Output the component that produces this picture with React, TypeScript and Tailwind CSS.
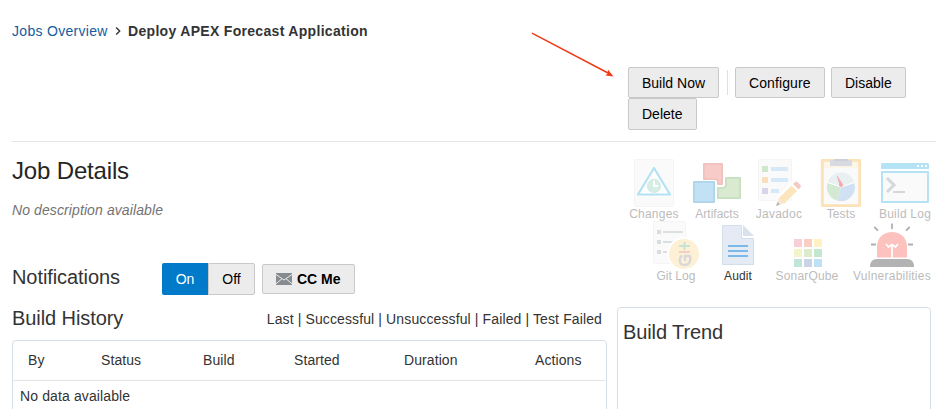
import React from "react";

type Tool = {
  label: string;
  width: string;
  viewBox: string;
  art: React.ReactNode;
  spacing: string;
  active?: boolean;
};

const changes = (
  <>
    <rect x="634.5" y="159.5" width="39" height="47" rx="1" fill="#fafafa" stroke="#f4f4f4" />
    <path d="M654 168L670 194.5H638Z" fill="#fff" stroke="#b3e2f5" strokeWidth="2.2" strokeLinejoin="round" />
    <circle cx="654" cy="186" r="7.2" fill="#d5ede4" />
    <path d="M654 180.5V186H658" fill="none" stroke="#fff" strokeWidth="1.8" />
  </>
);

const artifacts = (
  <>
    <path
      d="M703.9 179.1V163.9H722.1V184.1H717.9V182.5Q717.9 179.1 714.5 179.1Z"
      fill="#f7ccc8"
      stroke="#eec2be"
      strokeWidth="1.8"
      strokeLinejoin="round"
    />
    <path
      d="M725.9 177.9H740.1V198.1H717.9V187.9H722.5Q725.9 187.9 725.9 184.5Z"
      fill="#d9ead0"
      stroke="#c8dfc0"
      strokeWidth="1.8"
      strokeLinejoin="round"
    />
    <rect
      x="693.9"
      y="181.9"
      width="20.2"
      height="20.2"
      fill="#c2e1f4"
      stroke="#afd5ea"
      strokeWidth="1.8"
      strokeLinejoin="round"
    />
  </>
);

const javadoc = (
  <>
    <rect x="758.5" y="159.5" width="33" height="41" rx="1" fill="#fafafa" stroke="#f4f4f4" />
    <path d="M762 166h6v6h-6z" fill="#cfe7cd" />
    <path d="M762 177h6v6h-6z" fill="#fae0ba" />
    <path d="M762 188h6v6h-6z" fill="#dbd4e8" />
    <path d="M771 167h17v4h-17zM771 178h17v4h-17zM771 189h8v4h-8z" fill="#d6e9f8" />
    <path d="M775 207L777 197L794 180H801L803 187L784 205Z" fill="#fff" />
    <path d="M776 206L778.5 198.5L783.5 203.5Z" fill="#f5e7d8" />
    <path d="M776 206L777.5 202L780 204.5Z" fill="#b8b8b8" />
    <path d="M778.5 198.5L791.5 185.5L797 191L784 204Z" fill="#fbe5bd" />
    <path d="M793 184L795 182Q796.5 181 798 182.5L800.5 185Q801.5 186.5 800.3 187.7L798.5 189.5Z" fill="#f4cbc4" />
  </>
);

const tests = (
  <>
    <rect x="822.3" y="160.3" width="37.4" height="45.4" fill="#fcf5e8" stroke="#fbe2b9" strokeWidth="2.8" strokeLinejoin="round" />
    <path d="M824 168H858V204H824Z" fill="#fafafa" />
    <path d="M830 160h22v6h-22z" fill="#d7dadf" />
    <path d="M834 159h14v2h-14z" fill="#cbd0d8" />
    <path d="M841 187L827.7 182A14 14 0 0 1 854.3 182Z" fill="#e9f0f2" />
    <path d="M841 187L854.3 183A14 14 0 0 1 837 200.5Z" fill="#cfe1f2" />
    <path d="M841 187L837 200.5A14 14 0 0 1 827.5 183Z" fill="#d4e9d2" />
    <path d="M827.5 182.5L841 187L854.5 182.5" fill="none" stroke="#fff" strokeWidth="1" />
    <circle cx="841" cy="185" r="2.1" fill="#f4a9b1" />
    <path d="M837.4 176.5L841.7 183L840 185.5Z" fill="#f4a9b1" stroke="#f4a9b1" strokeWidth=".8" />
  </>
);

const buildLog = (
  <>
    <path d="M881 169V164.5Q881 163 882.5 163H927.5Q929 163 929 164.5V169Z" fill="#b3e3f5" />
    <path d="M917 165h2v2h-2zM921 165h2v2h-2zM925 165h2v2h-2z" fill="#fff" />
    <rect x="882" y="172" width="46" height="30" fill="#fafafa" stroke="#b3e3f5" strokeWidth="2" strokeLinejoin="round" />
    <path d="M887 178L894 185L887 192" fill="none" stroke="#d5d8db" strokeWidth="3" />
    <path d="M893 191h12v2h-12z" fill="#d5d8db" />
  </>
);

const gitLog = (
  <>
    <rect x="653.5" y="221.5" width="32" height="42" rx="1" fill="#fafafa" stroke="#f4f4f4" />
    <path d="M657 230h4v4h-4zM657 240h4v4h-4zM657 250h4v4h-4z" fill="#dadde0" />
    <path d="M663 231h20v2h-20zM663 241h14v2h-14zM663 251h4v2h-4z" fill="#dce0e3" />
    <circle cx="684" cy="254" r="17" fill="#fff" />
    <circle cx="684" cy="254" r="15" fill="#fdf0d4" />
    <path d="M679 246h11M684.5 242v8" fill="none" stroke="#c2e5d7" strokeWidth="2" />
    <path d="M679 252h11" stroke="#f4ccca" strokeWidth="2" />
    <path d="M682 255.5C678.5 258.5 679 265 684.5 265C690.5 265 691 259 689.8 256H685V261" fill="none" stroke="#d8d8dc" strokeWidth="2.4" />
  </>
);

const audit = (
  <>
    <path d="M722.5 225.5H741.5V238.5H753.5V264.5H722.5Z" fill="#e4ebf4" stroke="#d3deeb" strokeLinejoin="round" />
    <path d="M743 225L754 236H743Z" fill="#d9e2ec" />
    <path d="M728 245h20v2h-20zM728 250h20v2h-20zM728 255h20v2h-20z" fill="#7db9e8" />
  </>
);

const sonar = (
  <>
    <path d="M794 239h8v8h-8z" fill="#f8cfd8" />
    <path d="M804 239h8v8h-8z" fill="#f9cec3" />
    <path d="M814 239h8v8h-8z" fill="#fef2c5" />
    <path d="M794 249h8v8h-8z" fill="#f2f4ca" />
    <path d="M804 249h8v8h-8z" fill="#ddebcd" />
    <path d="M814 249h8v8h-8z" fill="#c5e6cf" />
    <path d="M794 259h8v8h-8z" fill="#c1e5d8" />
    <path d="M804 259h8v8h-8z" fill="#c9d4e9" />
    <path d="M814 259h8v8h-8z" fill="#bde1f5" />
  </>
);

const vulnerabilities = (
  <>
    <path d="M877 257.5V246.5C877 227 907 227 907 246.5V257.5Z" fill="#fec2be" />
    <path d="M870 267Q870 259 877 259H907Q914 259 914 267Z" fill="#b3b3b3" />
    <path d="M892 223.5V229M874.3 227L878 230.7M909.7 227L906 230.7M871 244.5H876M908 244.5H913" stroke="#b0b0b0" strokeWidth="1.8" />
    <path d="M892 258V245M886 244L888.5 247L892 244.5L895.5 247L898 244" fill="none" stroke="#fff" strokeWidth="1.7" />
  </>
);

const firstRow: Tool[] = [
  { label: "Changes", width: "w-[50px]", viewBox: "629 158 50 49", art: changes, spacing: "tracking-[0.24px]" },
  { label: "Artifacts", width: "w-[50px] ml-[13px]", viewBox: "692 158 50 49", art: artifacts, spacing: "tracking-normal" },
  { label: "Javadoc", width: "w-[50px] ml-3", viewBox: "754 158 50 49", art: javadoc, spacing: "tracking-[0.24px]" },
  { label: "Tests", width: "w-[50px] ml-3", viewBox: "816 158 50 49", art: tests, spacing: "tracking-[0.1px]" },
  { label: "Build Log", width: "w-[52px] ml-[13px]", viewBox: "879 158 52 49", art: buildLog, spacing: "tracking-[0.24px]" },
];

const secondRow: Tool[] = [
  { label: "Git Log", width: "w-[50px]", viewBox: "651 220 50 49", art: gitLog, spacing: "tracking-[0.05px]" },
  { label: "Audit", width: "w-[50px] ml-3", viewBox: "713 220 50 49", art: audit, spacing: "tracking-[0.1px]", active: true },
  { label: "SonarQube", width: "w-[62px] ml-[13px]", viewBox: "776 220 62 49", art: sonar, spacing: "tracking-[0.16px]" },
  { label: "Vulnerabilities", width: "w-[78px] ml-[15px]", viewBox: "853 220 78 49", art: vulnerabilities, spacing: "tracking-[0.24px]" },
];

function ToolLink({ label, width, viewBox, art, spacing, active }: Tool) {
  return (
    <a className={`flex h-[62px] flex-none flex-col items-center ${width}`}>
      <svg viewBox={viewBox} className="h-[49px] w-full flex-none overflow-visible">
        {art}
      </svg>
      <span
        className={`whitespace-nowrap text-xs leading-[14px] ${spacing} ${
          active ? "text-[#333]" : "text-[#bcbcbc]"
        }`}
      >
        {label}
      </span>
    </a>
  );
}

function Button({ className, children }: { className: string; children: React.ReactNode }) {
  return (
    <button
      className={`flex flex-none items-center whitespace-nowrap rounded-xs border border-[#c9c9c9] bg-[#ececec] pl-[13px] text-sm text-black ${className}`}
    >
      {children}
    </button>
  );
}

export default function App() {
  return (
    <div className="relative h-[409px] w-[942px] overflow-hidden bg-white font-['Liberation_Sans',Arial,sans-serif] text-sm text-[#333]">
      <header className="ml-3 h-[142px] w-[924px] border-b border-[#e5e5e5] pt-[21px]">
        <nav className="flex h-5 items-center leading-5">
          <a className="w-[96px] tracking-[0.3px] text-[#145c9e]">Jobs Overview</a>
          <svg viewBox="0 0 6 8" className="ml-[7px] mr-[7px] h-2 w-1.5 flex-none">
            <path d="M1.2 .5L4.7 4L1.2 7.5" fill="none" stroke="#333" strokeWidth="1.4" />
          </svg>
          <span className="font-bold tracking-[0.31px]">Deploy APEX Forecast Application</span>
        </nav>
        <div className="ml-[616px] mt-[26px]">
          <div className="flex">
            <Button className="h-[31px] w-[91px]">Build Now</Button>
            <span className="ml-2 mr-[7px] mt-[3px] h-[25px] w-px bg-[#dfdfdf]" />
            <Button className="h-[31px] w-[90px] tracking-[0.1px]">Configure</Button>
            <Button className="ml-1.5 h-[31px] w-[75px]">Disable</Button>
          </div>
          <Button className="h-8 w-[69px]">Delete</Button>
        </div>
      </header>

      <main className="flex pl-3">
        <section className="w-[595px]">
          <h1 className="mt-[13px] text-2xl leading-8 tracking-[-0.16px] text-[#252525]">Job Details</h1>
          <p className="mt-[13px] italic leading-5 tracking-[0.1px] text-[#737373]">No description available</p>
          <div className="mt-[43px] flex h-8 items-center">
            <h2 className="w-[150px] pb-1 text-xl leading-7 tracking-[-0.08px]">Notifications</h2>
            <button className="h-8 w-[46px] rounded-l-xs bg-[#007ac9] text-white">On</button>
            <button className="h-8 w-[47px] rounded-r-xs border border-[#c9c9c9] bg-[#ececec] text-black">
              Off
            </button>
            <Button className="ml-[7px] h-[30px] w-[93px] gap-[5px] pl-3 font-bold">
              <svg viewBox="0 0 16 12" className="h-3 w-4">
                <path d="M0 0h16v12H0z" fill="#868b90" />
                <path d="M0 1.5L8 7L16 1.5M0 10.8L6 5.7M16 10.8L10 5.7" fill="none" stroke="#ececec" strokeWidth="1" />
              </svg>
              CC Me
            </Button>
          </div>
          <div className="mt-[9px] flex h-7 items-center justify-between pr-[5px]">
            <h2 className="text-xl leading-7 tracking-[-0.08px]">Build History</h2>
            <p className="whitespace-nowrap pt-0.5 leading-5 tracking-[0.12px]">
              Last | Successful | Unsuccessful | Failed | Test Failed
            </p>
          </div>
          <div className="mt-2 h-[80px] rounded-t border border-[#d6dfe6]">
            <div className="mr-px flex h-10 items-center border-b border-[#e1e4e7] pb-0.5 pl-[15px] tracking-[0.08px]">
              <span className="w-[73px]">By</span>
              <span className="w-[102px]">Status</span>
              <span className="w-[91px]">Build</span>
              <span className="w-[110px]">Started</span>
              <span className="w-[131px]">Duration</span>
              <span>Actions</span>
            </div>
            <p className="pl-[7px] pt-[5px] leading-5 tracking-[0.12px]">No data available</p>
          </div>
        </section>

        <aside className="ml-2.5 w-[314px] pt-4">
          <div className="flex pl-3">{firstRow.map((tool) => <ToolLink key={tool.label} {...tool} />)}</div>
          <div className="flex pl-[34px]">{secondRow.map((tool) => <ToolLink key={tool.label} {...tool} />)}</div>
          <div className="mt-[25px] h-[120px] rounded-t border border-[#d6dfe6] pl-[5px] pt-2.5">
            <h2 className="text-xl leading-7 tracking-[-0.1px]">Build Trend</h2>
          </div>
        </aside>
      </main>

      <svg viewBox="0 0 84 46" className="absolute left-[531px] top-8 h-[46px] w-[84px]">
        <path d="M1 1.2L78 41.5" stroke="#f23a16" strokeWidth="1.5" />
        <path d="M82.5 44.5L74.4 43.5L77 41.2L76.9 37.6Z" fill="#f23a16" />
      </svg>
    </div>
  );
}
